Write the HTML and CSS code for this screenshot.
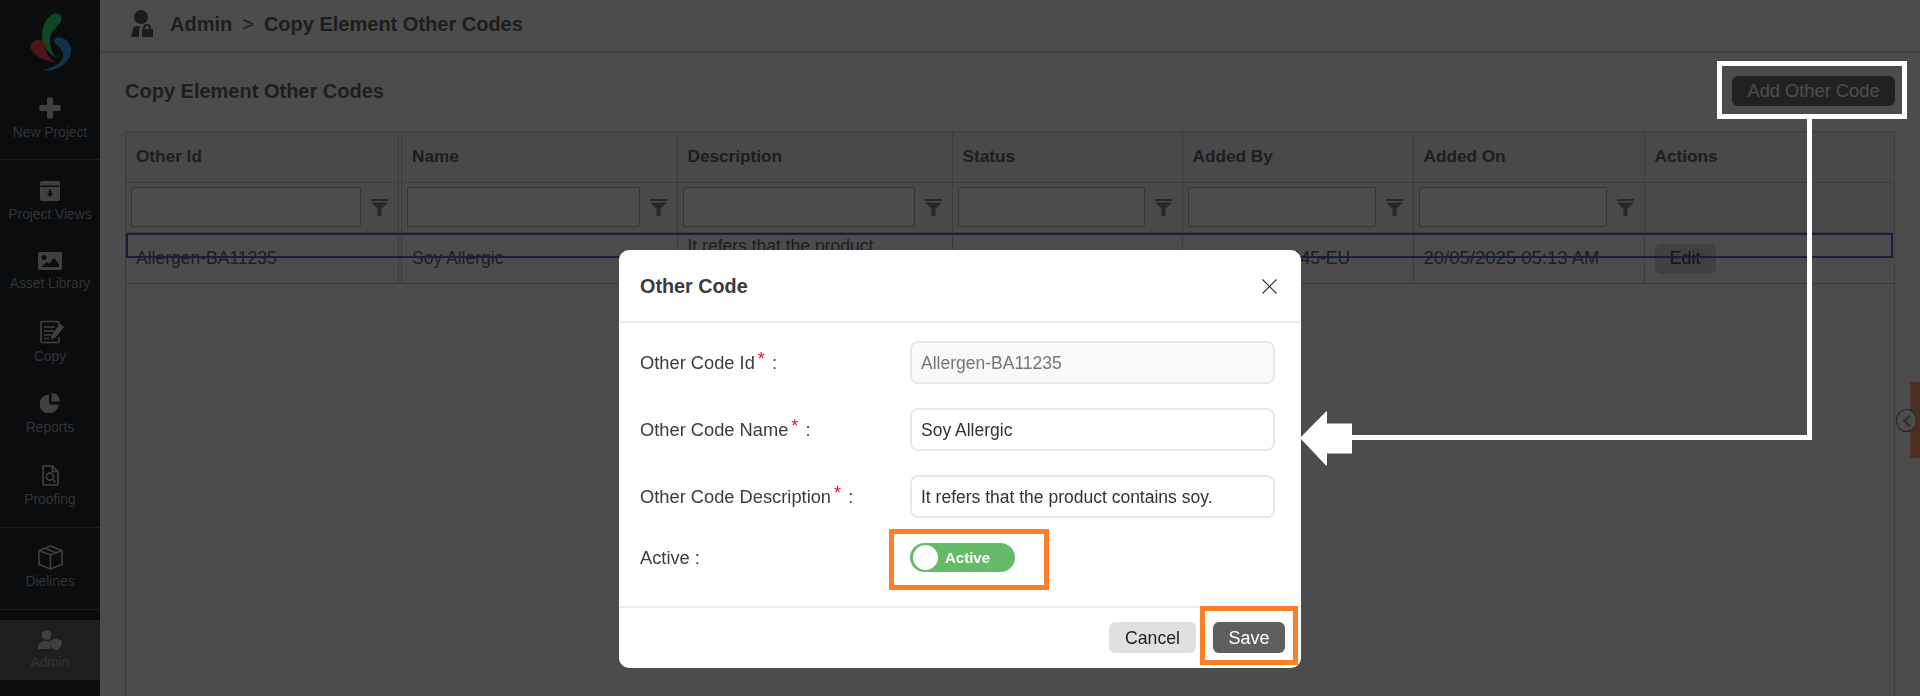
FILE: index.html
```html
<!DOCTYPE html>
<html lang="en">
<head>
<meta charset="utf-8">
<title>Copy Element Other Codes</title>
<link rel="stylesheet" href="styles.css">
</head>
<body>
<div class="app">
  <aside class="sidebar">
    <div class="logo">
      <svg width="44" height="60" viewBox="0 0 44 60">
        <path fill="#33e880" d="M26 2.500C31 1 35 5 33 10 30 16 23 19 22 28 21.500 35 24 41 28 47 21 43 15 35 14 26 13.500 15 19 6 26 2.500z"/>
        <path fill="#ff4450" d="M7 29.500C12 27 16 30 17 35 18 41 20 47 26 50L28 51C18 51 8 46 4 40 1.500 36 2 32 7 29.500z"/>
        <path fill="#2cb0ff" d="M29 26.500C35 25 42 31 43 38 44 47 36 56 24 59 21 59.500 17 59.500 15 59 24 57 33 53 35 46 36.500 40 32 36 28 33 25 30.500 26 27.500 29 26.500z"/>
      </svg>
    </div>
    <a class="nav nav-new">
      <svg width="22" height="22" viewBox="0 0 22 22"><path class="fill" d="M8 1.500a1 1 0 0 1 1-1h4a1 1 0 0 1 1 1V8h6.500a1 1 0 0 1 1 1v4a1 1 0 0 1-1 1H14v6.500a1 1 0 0 1-1 1H9a1 1 0 0 1-1-1V14H1.500a1 1 0 0 1-1-1V9a1 1 0 0 1 1-1H8z"/></svg>
      <span>New Project</span>
    </a>
    <a class="nav nav-views">
      <svg width="22" height="20" viewBox="0 0 22 20"><path class="fill" fill-rule="evenodd" d="M3 0h16a2 2 0 0 1 2 2v16a2 2 0 0 1-2 2H3a2 2 0 0 1-2-2V2a2 2 0 0 1 2-2zM1.500 4.500v1.500h19V4.500zM9.700 8.500v4H7.500l3.500 3.500 3.500-3.500h-2.200v-4z"/></svg>
      <span>Project Views</span>
    </a>
    <a class="nav nav-assets">
      <svg width="24" height="18" viewBox="0 0 24 18"><path class="fill" fill-rule="evenodd" d="M2 0h20a2 2 0 0 1 2 2v14a2 2 0 0 1-2 2H2a2 2 0 0 1-2-2V2a2 2 0 0 1 2-2zM6 3a2.500 2.500 0 1 0 0 5 2.500 2.500 0 0 0 0-5zM3 15h18v-3l-5-6-5 6-2-2z"/></svg>
      <span>Asset Library</span>
    </a>
    <a class="nav nav-copy">
      <svg width="26" height="24" viewBox="0 0 26 24"><g class="line"><path d="M20 7V3a1.500 1.500 0 0 0-1.500-1.500h-15A1.500 1.500 0 0 0 2 3v18a1.500 1.500 0 0 0 1.500 1.500h15A1.500 1.500 0 0 0 20 21v-4"/><path d="M5 7h11M5 11h10M5 15h7M5 18.500h5"/></g><path class="fill" d="M21 4l4 3-9 11-4 1.500 .5-4.500z"/></svg>
      <span>Copy</span>
    </a>
    <a class="nav nav-reports">
      <svg width="20" height="20" viewBox="0 0 20 20"><path class="fill" d="M9 1.500v10h9.500A9.500 9.500 0 1 1 9 1.500z"/><path class="fill" d="M11.500 0A8.500 8.500 0 0 1 20 8.500h-8.500z"/></svg>
      <span>Reports</span>
    </a>
    <a class="nav nav-proof">
      <svg width="17" height="21" viewBox="0 0 17 21"><g class="line"><path d="M1 1h9.500L16 6.500V19a1 1 0 0 1-1 1H2a1 1 0 0 1-1-1z"/><path d="M10.500 1v5.500H16"/><circle cx="8" cy="11.500" r="3.600"/><path d="M10.700 14.200l3 3"/></g></svg>
      <span>Proofing</span>
    </a>
    <a class="nav nav-dielines">
      <svg width="25" height="25" viewBox="0 0 25 25"><g class="line"><path d="M12.500 1L24 5.500v14L12.500 24 1 19.500v-14z"/><path d="M1 5.500L12.500 10 24 5.500M12.500 10v14M7 3.200L18 7.800"/></g></svg>
      <span>Dielines</span>
    </a>
    <a class="nav nav-admin">
      <svg width="24" height="20" viewBox="0 0 24 20"><circle class="fill" cx="8.500" cy="5" r="4.800"/><path class="fill" d="M0 19v-2.500C0 13 4 11 8.500 11c1.400 0 2.700.2 3.900.5V19z"/><path class="fill" d="M18 8.500l5.500 2v3.500c0 3-2.300 5-5.500 6-3.200-1-5.500-3-5.500-6v-3.500z"/></svg>
      <span>Admin</span>
    </a>
  </aside>

  <main class="main">
    <header class="topbar">
      <svg width="24" height="27" viewBox="0 0 24 27"><circle class="dark" cx="11" cy="7" r="7"/><path class="dark" d="M1 27l2-8c.5-2 2-3 4-3h3l-1 4v7z"/><path class="dark" d="M12 27v-8h1v-1a4 4 0 0 1 8 0v1h2v8zM15 19h4v-1a2 2 0 0 0-4 0z" fill-rule="evenodd"/></svg>
      <h1 class="crumb"><span>Admin</span><span class="sep">&gt;</span><span>Copy Element Other Codes</span></h1>
    </header>
    <section class="page">
      <div class="page-head">
        <h2>Copy Element Other Codes</h2>
        <button class="btn-add">Add Other Code</button>
      </div>
      <div class="grid-wrap">
        <table class="grid">
          <colgroup>
            <col class="c1"><col class="c2"><col class="c3"><col class="c4"><col class="c5"><col class="c6"><col>
          </colgroup>
          <thead>
            <tr class="head-row">
              <th>Other Id</th><th>Name</th><th>Description</th><th>Status</th><th>Added By</th><th>Added On</th><th>Actions</th>
            </tr>
            <tr class="filter-row">
              <td><div class="filter"><input type="text"><svg width="17" height="17" viewBox="0 0 17 17"><path class="dark2" d="M0 0h17v2H0zM0 3.500h17L10.500 10v7h-4v-7z"/></svg></div></td>
              <td><div class="filter"><input type="text"><svg width="17" height="17" viewBox="0 0 17 17"><path class="dark2" d="M0 0h17v2H0zM0 3.500h17L10.500 10v7h-4v-7z"/></svg></div></td>
              <td><div class="filter"><input type="text"><svg width="17" height="17" viewBox="0 0 17 17"><path class="dark2" d="M0 0h17v2H0zM0 3.500h17L10.500 10v7h-4v-7z"/></svg></div></td>
              <td><div class="filter"><input type="text"><svg width="17" height="17" viewBox="0 0 17 17"><path class="dark2" d="M0 0h17v2H0zM0 3.500h17L10.500 10v7h-4v-7z"/></svg></div></td>
              <td><div class="filter"><input type="text"><svg width="17" height="17" viewBox="0 0 17 17"><path class="dark2" d="M0 0h17v2H0zM0 3.500h17L10.500 10v7h-4v-7z"/></svg></div></td>
              <td><div class="filter"><input type="text"><svg width="17" height="17" viewBox="0 0 17 17"><path class="dark2" d="M0 0h17v2H0zM0 3.500h17L10.500 10v7h-4v-7z"/></svg></div></td>
              <td></td>
            </tr>
          </thead>
          <tbody>
            <tr class="data-row">
              <td>Allergen-BA11235</td>
              <td>Soy Allergic</td>
              <td class="desc">It refers that the product contains soy.</td>
              <td>Active</td>
              <td>Brand.User1245-EU</td>
              <td class="date">20/05/2025 05:13 AM</td>
              <td><button class="btn-edit">Edit</button></td>
            </tr>
          </tbody>
        </table>
        <div class="row-focus"></div>
      </div>
    </section>
    <div class="side-tab"></div>
    <div class="side-toggle"><svg width="12" height="14" viewBox="0 0 12 14"><path d="M9 1.500L3.500 7 9 12.500" fill="none" stroke="#a8a8a8" stroke-width="2.600"/></svg></div>
  </main>
</div>

<div class="backdrop">
  <div class="modal">
    <div class="modal-head">
      <h3>Other Code</h3>
      <svg width="15" height="15" viewBox="0 0 15 15"><path d="M.5.500l14 14M14.500.500l-14 14" fill="none" stroke="#333" stroke-width="1.200"/></svg>
    </div>
    <div class="modal-body">
      <div class="form-row"><label>Other Code Id<sup>*</sup> :</label><input class="field" type="text" value="Allergen-BA11235" disabled></div>
      <div class="form-row"><label>Other Code Name<sup>*</sup> :</label><input class="field" type="text" value="Soy Allergic"></div>
      <div class="form-row"><label>Other Code Description<sup>*</sup> :</label><input class="field" type="text" value="It refers that the product contains soy."></div>
      <div class="form-row form-row-toggle"><label>Active :</label><div class="toggle"><span class="knob"></span><span class="toggle-text">Active</span></div></div>
    </div>
    <div class="modal-foot">
      <button class="btn-cancel">Cancel</button>
      <button class="btn-save">Save</button>
    </div>
  </div>
</div>

<div class="mark mark-add"></div>
<div class="mark mark-toggle"></div>
<div class="mark mark-save"></div>
<svg class="arrow" width="520" height="360" viewBox="0 0 520 360">
  <path fill="#fff" d="M517 0v324H57v-5h455V0z"/>
  <path fill="#fff" d="M5 322L31 295.500h1v12h25v30H32v12h-1z"/>
</svg>
</body>
</html>
```

FILE: styles.css
```css
* { box-sizing: border-box; }
html, body { margin: 0; height: 696px; overflow: hidden; }
body { font-family: "Liberation Sans", Arial, sans-serif; color: #5f6770; background: #fff; }
button, input { font-family: inherit; }

.app { display: flex; height: 696px; }

.sidebar { width: 100px; flex: none; background: #232a31; display: flex; flex-direction: column; align-items: stretch; }
.logo { height: 79px; padding: 11px 0 0 28px; }
.nav { display: flex; flex-direction: column; align-items: center; color: #a0a8b0; font-size: 13.800px; line-height: 16px; flex: none; }
.nav span { display: block; }
.fill { fill: #d8d8d8; }
.line { fill: none; stroke: #d8d8d8; stroke-width: 1.600; }
.nav-new { padding-top: 18px; height: 81px; border-bottom: 1px solid #55606a; gap: 6px; }
.nav-views { padding-top: 21px; height: 66px; gap: 6px; }
.nav-assets { padding-top: 26px; height: 68px; gap: 6px; }
.nav-copy { padding-top: 26px; height: 71px; gap: 5px; }
.nav-copy svg { margin-left: 3px; }
.nav-reports { padding-top: 28px; height: 71px; gap: 7px; }
.nav-proof { padding-top: 29px; height: 92px; border-bottom: 1px solid #55606a; gap: 6px; }
.nav-dielines { padding-top: 17px; height: 82px; border-bottom: 1px solid #55606a; gap: 4px; }
.nav-admin { margin-top: 10px; height: 60px; padding-top: 10px; background: #666; gap: 5px; }

.main { flex: 1; min-width: 0; display: flex; flex-direction: column; position: relative; }
.topbar { height: 52px; border-bottom: 1px solid #c8c8c8; box-shadow: 0 1px 3px rgba(0,0,0,.12); padding: 10px 0 0 30px; display: flex; gap: 16px; align-items: flex-start; background: #fff; }
.dark { fill: #5a5f66; }
.dark2 { fill: #80868c; }
.crumb { margin: 0; font-size: 20px; font-weight: 700; color: #60666e; line-height: 28px; display: flex; gap: 10px; }
.crumb .sep { font-weight: 400; }

.page { flex: 1; padding: 24px 25px 0 25px; display: flex; flex-direction: column; min-height: 0; }
.page-head { display: flex; justify-content: space-between; align-items: center; height: 30px; margin-bottom: 25px; }
.page-head h2 { margin: 0; font-size: 20px; font-weight: 700; color: #60666e; }
.btn-add { width: 163px; height: 30px; border: 0; border-radius: 6px; background: #6f6f6f; color: #fff; font-size: 18.300px; padding: 0; }

.grid-wrap { flex: 1; position: relative; border: 1px solid #d0d0d0; border-bottom: 0; }
.grid { width: 100%; border-collapse: collapse; table-layout: fixed; }
.c1 { width: 274px; } .c2 { width: 277px; } .c3 { width: 275px; } .c4 { width: 230px; } .c5 { width: 231px; } .c6 { width: 231px; }
.grid th, .grid td { border: 1px solid #c9c9c9; padding: 0 10px; overflow: hidden; white-space: nowrap; text-align: left; }
.grid th:first-child, .grid td:first-child { border-left: 0; border-right: 4px double #c9c9c9; }
.grid th:last-child, .grid td:last-child { border-right: 0; }
.grid tr:first-child th { border-top: 0; }
.head-row { height: 50px; background: #f3f3f3; }
.head-row th { font-size: 17.200px; color: #5e6771; }
.filter-row { height: 50px; background: #f6f6f6; }
.filter-row td { padding: 0 10px 0 5px; }
.filter { display: flex; align-items: center; justify-content: space-between; }
.filter input { width: calc(100% - 27px); height: 40px; border: 1px solid #b5b5b5; border-radius: 2px; background: #fff; padding: 0 6px; }
.data-row { height: 51px; background: #fff; }
.data-row td { font-size: 17.500px; color: #5f6770; padding-top: 2px; }
.data-row td.desc { white-space: normal; vertical-align: top; padding-top: 2px; line-height: 22px; }
.data-row td.date { font-size: 18.500px; padding-top: 0; }
.btn-edit { width: 61px; height: 30px; border: 0; border-radius: 6px; background: #d8d8d8; color: #444; font-size: 18px; padding: 0; }
.row-focus { position: absolute; left: 0; right: 1px; top: 101px; height: 25px; border: 2px solid #5068d0; pointer-events: none; }

.side-tab { position: absolute; right: 0; top: 382px; width: 10px; height: 76px; background: #ff9a7e; }
.side-toggle { position: absolute; right: 3px; top: 409px; width: 21px; height: 23px; border: 1px solid #777; border-radius: 50%; background: #fff; display: flex; align-items: center; justify-content: center; }

.backdrop { position: fixed; inset: 0; background: rgba(0,0,0,.7); display: flex; justify-content: center; padding-top: 250px; }
.modal { width: 682px; height: 418px; background: #fff; border-radius: 10px; display: flex; flex-direction: column; color: #333; }
.modal-head { height: 73px; padding: 1px 24px 0 21px; border-bottom: 2px solid #ececec; display: flex; align-items: center; justify-content: space-between; }
.modal-head h3 { margin: 0; font-size: 19.800px; font-weight: 700; color: #3b3b3b; }
.modal-body { flex: 1; padding: 18px 26px 0 21px; display: flex; flex-direction: column; gap: 24.500px; }
.form-row { display: flex; align-items: center; }
.form-row label { width: 270px; flex: none; font-size: 18.300px; color: #3d3d3d; padding-top: 1px; }
.form-row sup { color: #e0102a; font-size: 18px; line-height: 0; vertical-align: baseline; position: relative; top: -4px; margin: 0 2px 0 3px; }
.field { width: 365px; height: 42.500px; border: 2px solid #e8e8e8; border-radius: 8px; padding: 2px 9px 0; font-size: 17.500px; color: #333; background: #fff; }
.field:disabled { background: #f9f9f9; color: #777; }
.form-row-toggle { height: 29px; margin-top: 1px; }
.toggle { width: 105px; height: 29px; border-radius: 15px; background: #66bb6a; display: flex; align-items: center; padding-left: 3px; gap: 7px; }
.knob { width: 25px; height: 25px; border-radius: 50%; background: #fff; }
.toggle-text { color: #fff; font-weight: 700; font-size: 15px; }
.modal-foot { height: 62px; border-top: 2px solid #ececec; display: flex; justify-content: flex-end; align-items: flex-start; padding: 14px 16px 0 0; gap: 17px; }
.btn-cancel { width: 87px; height: 31px; border: 0; border-radius: 6px; background: #e0e0e0; color: #222; font-size: 17.700px; padding: 1px 0 0; }
.btn-save { width: 72px; height: 31px; border: 0; border-radius: 6px; background: #5f5f5f; color: #fff; font-size: 18px; padding: 1px 0 0; }

.mark { position: fixed; border: 5px solid #ff7f27; }
.mark-add { left: 1717px; top: 61px; width: 190px; height: 58px; border-color: #fff; }
.mark-toggle { left: 889px; top: 529px; width: 160px; height: 61px; }
.mark-save { left: 1200px; top: 606px; width: 98px; height: 59px; }
.arrow { position: fixed; left: 1295px; top: 116px; }
```
